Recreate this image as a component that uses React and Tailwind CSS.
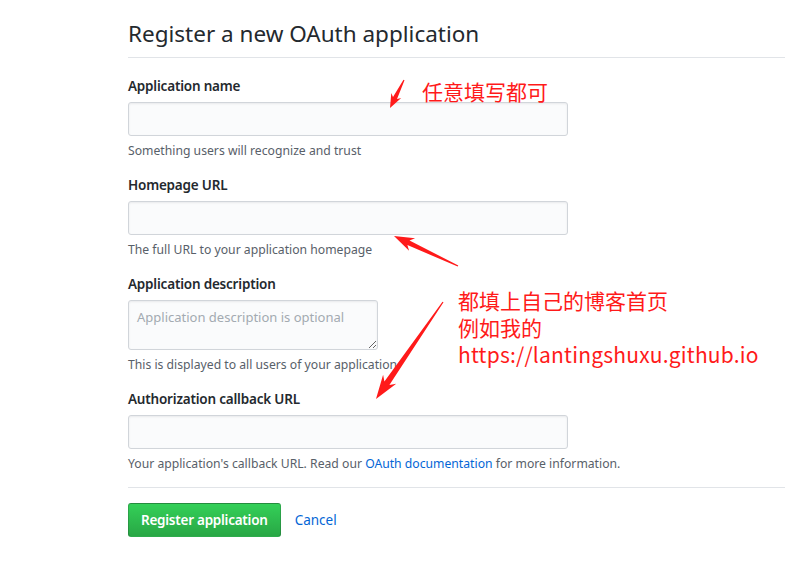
const FONT = { fontFamily: '"Noto Sans", "Liberation Sans", sans-serif' };

// thin-to-thick arrow polygon from tail to tip
function arrowPoints(tx, ty, px, py, headLen, headHalf, shaftEnd) {
  const dx = px - tx;
  const dy = py - ty;
  const len = Math.hypot(dx, dy);
  const ux = dx / len;
  const uy = dy / len;
  const nx = -uy;
  const ny = ux;
  const bx = px - ux * headLen;
  const by = py - uy * headLen;
  const nbx = px - ux * headLen * 0.8;
  const nby = py - uy * headLen * 0.8;
  const pts = [
    [tx + nx * 0.6, ty + ny * 0.6],
    [nbx + nx * shaftEnd, nby + ny * shaftEnd],
    [bx + nx * headHalf, by + ny * headHalf],
    [px, py],
    [bx - nx * headHalf, by - ny * headHalf],
    [nbx - nx * shaftEnd, nby - ny * shaftEnd],
    [tx - nx * 0.6, ty - ny * 0.6],
  ];
  return pts.map((p) => p.map((v) => v.toFixed(1)).join(',')).join(' ');
}

const Field = ({ label, hint, textarea, placeholder }) => (
  <div className="flex flex-col">
    <label className="text-[13.5px] leading-[20px] font-semibold tracking-[-0.2px] text-[#24292e]">{label}</label>
    {textarea ? (
      <textarea
        placeholder={placeholder}
        className="mt-[6px] w-[250px] h-[50px] rounded-[3px] border border-[#d1d5da] bg-[#fafbfc] px-[8px] pt-[6px] text-[13px] leading-[20px] text-[#24292e] placeholder:text-[#a3aab1] shadow-[inset_0_1px_2px_rgba(27,31,35,0.075)] outline-none"
        style={FONT}
      />
    ) : (
      <input
        className="mt-[6px] w-[440px] h-[34px] rounded-[3px] border border-[#d1d5da] bg-[#fafbfc] px-[8px] text-[14px] shadow-[inset_0_1px_2px_rgba(27,31,35,0.075)] outline-none"
        style={FONT}
      />
    )}
    <p className="mt-[6px] text-[12.2px] leading-[18px] text-[#586069]">{hint}</p>
  </div>
);

export default function App() {
  return (
    <div className="relative w-[785px] h-[563px] overflow-hidden bg-white" style={FONT}>
      <div className="pl-[128px]">
        <h2 className="pt-[19px] pb-[8px] border-b border-[#e1e4e8] text-[22.5px] leading-[30px] font-normal text-[#24292e]">
          Register a new OAuth application
        </h2>

        <div className="mt-[18px] flex flex-col gap-[15px]">
          <Field label="Application name" hint="Something users will recognize and trust" />
          <Field label="Homepage URL" hint="The full URL to your application homepage" />
          <Field
            label="Application description"
            textarea
            placeholder="Application description is optional"
            hint="This is displayed to all users of your application"
          />
          <Field
            label="Authorization callback URL"
            hint={
              <>
                Your application's callback URL. Read our{' '}
                <a className="text-[#0366d6]">OAuth documentation</a> for more information.
              </>
            }
          />
        </div>

        <div className="mt-[14px] border-t border-[#e1e4e8] pt-[15px] flex items-center gap-[14px]">
          <button className="h-[34px] px-[12px] rounded-[3px] border border-[rgba(27,31,35,0.2)] bg-gradient-to-b from-[#34d058] to-[#28a745] text-white text-[13.5px] tracking-[-0.25px] font-semibold">
            Register application
          </button>
          <a className="text-[13.5px] text-[#0366d6]">Cancel</a>
        </div>
      </div>

      {/* red annotations drawn over the form */}
      <div
        className="absolute left-[422px] top-[77px] text-[21px] leading-[28px] text-[#ff1a1a]"
        style={{ fontFamily: '"Noto Sans CJK SC", sans-serif' }}
      >
        任意填写都可
      </div>
      <div
        className="absolute left-[458px] top-[287px] flex flex-col text-[21px] leading-[27px] text-[#ff1a1a]"
        style={{ fontFamily: '"Noto Sans CJK SC", sans-serif' }}
      >
        <span className="h-[27px]">都填上自己的博客首页</span>
        <span className="h-[27px]">例如我的</span>
        <span className="h-[27px] tracking-[0.2px]">https://lantingshuxu.github.io</span>
      </div>
      <svg className="absolute inset-0 pointer-events-none" width="785" height="563">
        <polygon points={arrowPoints(404, 80, 390, 108, 14, 5.5, 2.2)} fill="#ff1a1a" />
        <polygon points={arrowPoints(458, 266, 394, 236, 20, 7, 2.5)} fill="#ff1a1a" />
        <polygon points={arrowPoints(443, 302, 376, 399, 24, 8, 3)} fill="#ff1a1a" />
      </svg>
    </div>
  );
}
